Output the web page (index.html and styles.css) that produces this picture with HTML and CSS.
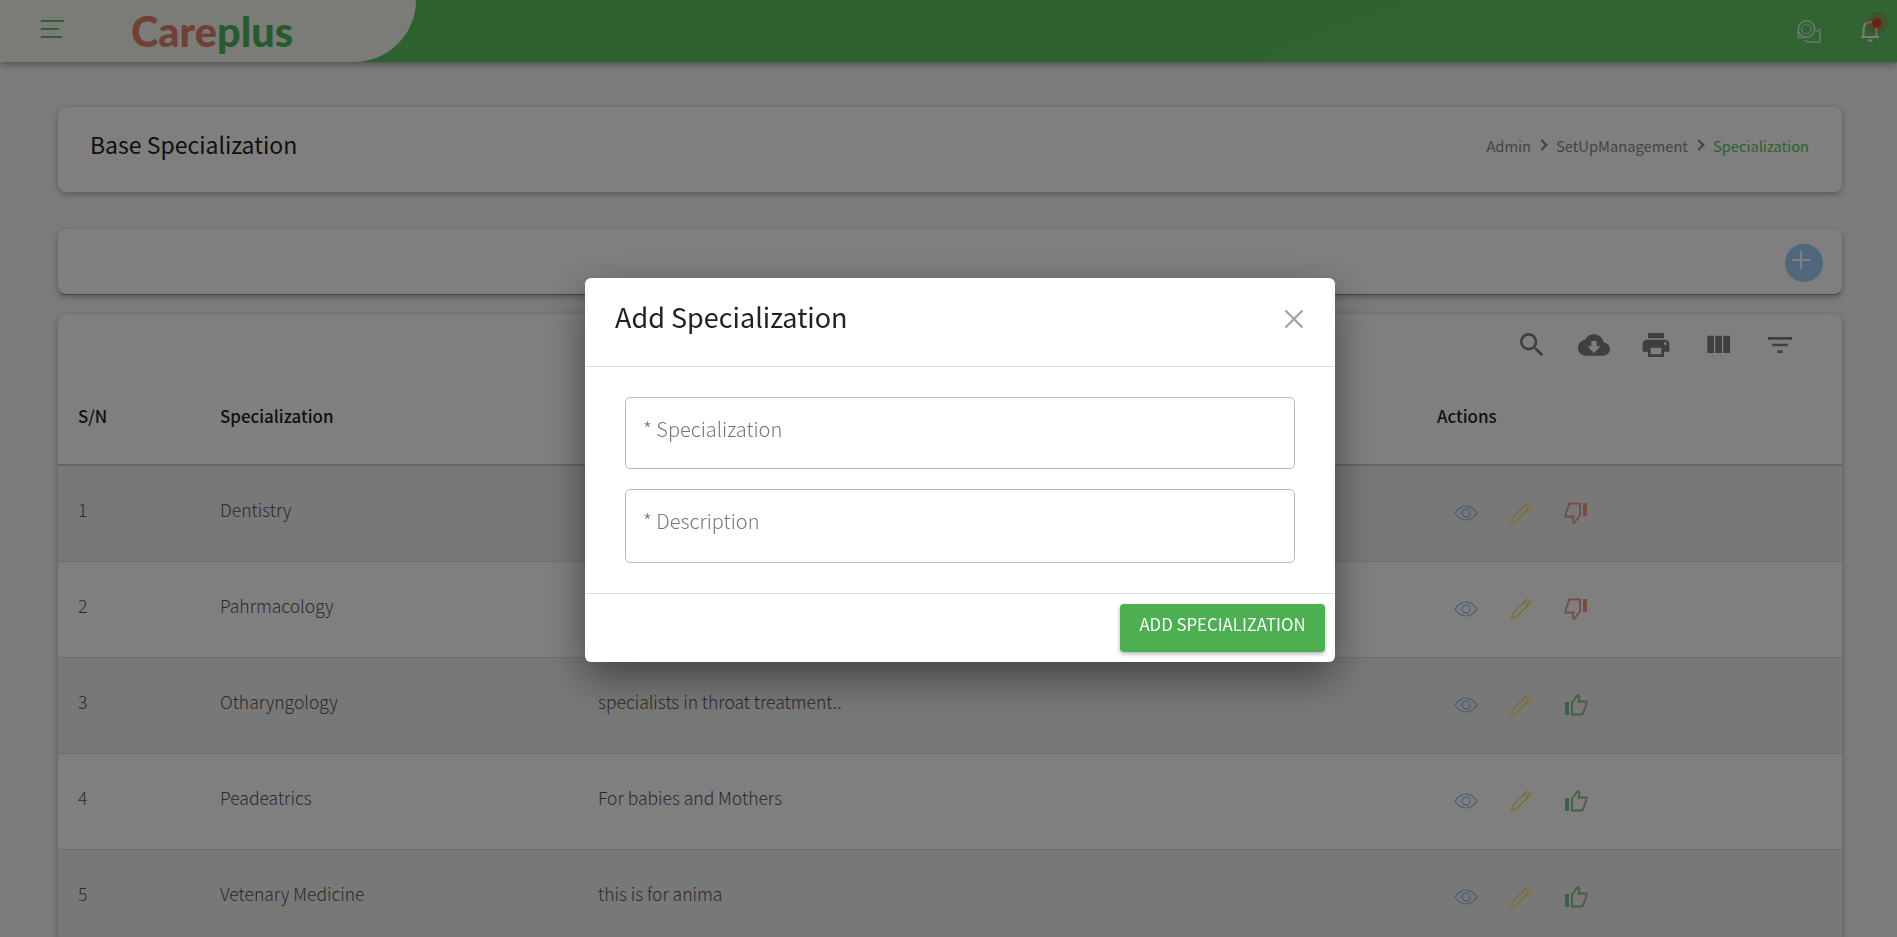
FILE: index.html
```html
<!DOCTYPE html>
<html lang="en">
<head>
  <meta charset="UTF-8" />
  <title>Careplus - Base Specialization</title>
  <link rel="stylesheet" href="styles.css">
</head>
<body>

  <svg class="icon-defs" width="0" height="0">
    <symbol id="i-eye" viewBox="0 0 24 16">
      <path d="M1 8C4 3.600 7.600 1 12 1s8 2.600 11 7c-3 4.400-6.600 7-11 7S4 12.400 1 8z" fill="none" stroke="currentColor" stroke-width="1.200"/>
      <circle cx="12" cy="8" r="4" fill="none" stroke="currentColor" stroke-width="1.200"/>
    </symbol>
    <symbol id="i-pencil" viewBox="0 0 22 22">
      <path d="M1.500 20.500l1.300-5.300L16 2.200c1-1 2.600-1 3.600 0 1 1 1 2.600 0 3.600L6.600 19l-5.100 1.500z" fill="none" stroke="currentColor" stroke-width="1.100"/>
      <path d="M15 3.400l3.400 3.600" fill="none" stroke="currentColor" stroke-width="1.100"/>
    </symbol>
    <symbol id="i-down" viewBox="0 0 24 22">
      <path d="M16 1.500H5.500L1.500 12v2.500h8L8.500 19l1.500 2 6-7.500z" fill="none" stroke="currentColor" stroke-width="1.800"/>
      <rect x="19" y="1" width="4" height="13"/>
    </symbol>
    <symbol id="i-up" viewBox="0 0 24 22">
      <path d="M8 20.500h10.500l4-10.500V7.500h-8L15.500 3 14 1 8 8.500z" fill="none" stroke="currentColor" stroke-width="1.800"/>
      <rect x="1" y="8" width="4" height="13"/>
    </symbol>
  </svg>

  <header class="topbar">
    <div class="brand">
      <svg class="menu-icon" width="24" height="18" viewBox="0 0 24 18">
        <path d="M0 1h23M0 9h18M0 17h21" stroke="#5cc45e" stroke-width="2"/>
      </svg>
      <div class="logo"><span class="logo-care">Care</span><span class="logo-plus">plus</span></div>
    </div>
    <div class="topbar-icons">
      <svg class="chat-icon" width="24" height="23" viewBox="0 0 24 23" fill="none" stroke="#fff" stroke-width="1.400">
        <circle cx="9.500" cy="9" r="8.300"/>
        <circle cx="9.500" cy="9" r="4.800" stroke-width="1"/>
        <path d="M1.200 10v7.500h8.300M19 12l4-2.500V22H10l-2.500-2"/>
      </svg>
      <div class="bell">
        <svg width="20" height="22" viewBox="0 0 20 22" fill="none" stroke="#fff" stroke-width="2">
          <path d="M1 17h18M3.500 17V9.500C3.500 5.500 6 2 10 2s6.500 3.500 6.500 7.500V17"/>
          <path d="M7.500 20.500h5"/>
        </svg>
        <span class="bell-dot"></span>
      </div>
    </div>
  </header>

  <main class="content">
    <section class="card page-title">
      <h2>Base Specialization</h2>
      <nav class="crumbs">
        <span>Admin</span><i class="chev"></i><span>SetUpManagement</span><i class="chev"></i><span class="crumb-active">Specialization</span>
      </nav>
    </section>

    <section class="card add-bar">
      <span class="add-btn"></span>
    </section>

    <section class="card table-card">
      <div class="table-tools">
        <svg width="32" height="32" viewBox="0 0 24 24"><path d="M15.500 14h-.79l-.28-.27A6.470 6.470 0 0 0 16 9.500 6.500 6.500 0 1 0 9.500 16c1.610 0 3.090-.59 4.230-1.570l.27.28v.79l5 4.990L20.490 19l-4.990-5zm-6 0C7.010 14 5 11.990 5 9.500S7.010 5 9.500 5 14 7.010 14 9.500 11.990 14 9.500 14z"/></svg>
        <svg width="32" height="32" viewBox="0 0 24 24"><path d="M19.350 10.040A7.490 7.490 0 0 0 12 4C9.110 4 6.600 5.640 5.350 8.040A5.994 5.994 0 0 0 0 14c0 3.310 2.690 6 6 6h13c2.760 0 5-2.240 5-5 0-2.640-2.050-4.780-4.650-4.960zM17 13l-5 5-5-5h3V9h4v4h3z"/></svg>
        <svg width="32" height="32" viewBox="0 0 24 24"><path d="M19 8H5c-1.660 0-3 1.340-3 3v6h4v4h12v-4h4v-6c0-1.660-1.340-3-3-3zm-3 11H8v-5h8v5zm3-7c-.550 0-1-.450-1-1s.450-1 1-1 1 .450 1 1-.450 1-1 1zm-1-9H6v4h12V3z"/></svg>
        <svg width="32" height="32" viewBox="0 0 24 24"><path d="M10 18h5V5h-5v13zm-6 0h5V5H4v13zM16 5v13h5V5h-5z"/></svg>
        <svg width="32" height="32" viewBox="0 0 24 24"><path d="M10 18h4v-2h-4v2zM3 6v2h18V6H3zm3 7h12v-2H6v2z"/></svg>
      </div>

      <div class="row row-head">
        <div class="col-sn">S/N</div>
        <div class="col-name">Specialization</div>
        <div class="col-desc"></div>
        <div class="col-actions">Actions</div>
      </div>

      <div class="row row-odd">
        <div class="col-sn">1</div>
        <div class="col-name">Dentistry</div>
        <div class="col-desc"></div>
        <div class="col-actions actions">
          <svg class="a-eye"><use href="#i-eye"/></svg>
          <svg class="a-pencil"><use href="#i-pencil"/></svg>
          <svg class="a-down"><use href="#i-down"/></svg>
        </div>
      </div>
      <div class="row">
        <div class="col-sn">2</div>
        <div class="col-name">Pahrmacology</div>
        <div class="col-desc"></div>
        <div class="col-actions actions">
          <svg class="a-eye"><use href="#i-eye"/></svg>
          <svg class="a-pencil"><use href="#i-pencil"/></svg>
          <svg class="a-down"><use href="#i-down"/></svg>
        </div>
      </div>
      <div class="row row-odd">
        <div class="col-sn">3</div>
        <div class="col-name">Otharyngology</div>
        <div class="col-desc">specialists in throat treatment..</div>
        <div class="col-actions actions">
          <svg class="a-eye"><use href="#i-eye"/></svg>
          <svg class="a-pencil"><use href="#i-pencil"/></svg>
          <svg class="a-up"><use href="#i-up"/></svg>
        </div>
      </div>
      <div class="row">
        <div class="col-sn">4</div>
        <div class="col-name">Peadeatrics</div>
        <div class="col-desc">For babies and Mothers</div>
        <div class="col-actions actions">
          <svg class="a-eye"><use href="#i-eye"/></svg>
          <svg class="a-pencil"><use href="#i-pencil"/></svg>
          <svg class="a-up"><use href="#i-up"/></svg>
        </div>
      </div>
      <div class="row row-odd">
        <div class="col-sn">5</div>
        <div class="col-name">Vetenary Medicine</div>
        <div class="col-desc">this is for anima</div>
        <div class="col-actions actions">
          <svg class="a-eye"><use href="#i-eye"/></svg>
          <svg class="a-pencil"><use href="#i-pencil"/></svg>
          <svg class="a-up"><use href="#i-up"/></svg>
        </div>
      </div>
    </section>
  </main>

  <div class="backdrop">
    <div class="modal">
      <div class="modal-head">
        <h3>Add Specialization</h3>
        <svg class="modal-close" width="20" height="20" viewBox="0 0 20 20"><path d="M1.500 1.500l17 17M18.500 1.500l-17 17" stroke="#a5a5a5" stroke-width="2.400"/></svg>
      </div>
      <div class="modal-body">
        <div class="field field-first">* Specialization</div>
        <div class="field field-second">* Description</div>
      </div>
      <div class="modal-foot">
        <button class="save-btn">ADD SPECIALIZATION</button>
      </div>
    </div>
  </div>

</body>
</html>
```

FILE: styles.css
```css
:root {
  --brand: #5cc45e;
  --line: #dedede;
}

* {
  box-sizing: border-box;
  margin: 0;
  padding: 0;
}

html, body {
  height: 100%;
  overflow: hidden;
}

body {
  font-family: "Noto Sans CJK SC", "Noto Sans", sans-serif;
  background: #f8f8f8;
  color: #333;
}

.icon-defs {
  position: absolute;
}

/* top bar */
.topbar {
  height: 62px;
  display: flex;
  justify-content: space-between;
  background: var(--brand);
  box-shadow: 0 2px 8px rgba(0, 0, 0, 0.4);
  position: relative;
  overflow: hidden;
}

.topbar::before {
  content: '';
  position: absolute;
  left: 1059px;
  top: -50px;
  width: 1482px;
  height: 700px;
  border-radius: 50%;
  background: rgba(255, 255, 255, 0.06);
}

.brand {
  width: 416px;
  display: flex;
  align-items: center;
  padding-left: 41px;
  background: #f7f8ef;
  border-bottom-right-radius: 62px 62px;
  position: relative;
}

.menu-icon {
  margin-top: -4px;
}

.logo {
  margin-left: 66px;
  font-family: "Lato", sans-serif;
  font-weight: 900;
  font-size: 41.500px;
  line-height: 62px;
}

.logo-care { color: #e0806e; }
.logo-plus { color: #4cb85a; }

.topbar-icons {
  display: flex;
  align-items: center;
  gap: 39px;
  padding-right: 17px;
  position: relative;
}

.chat-icon {
  opacity: 0.8;
}

.bell {
  position: relative;
  height: 22px;
  opacity: 0.9;
}

.bell-dot {
  position: absolute;
  left: 12px;
  top: -2px;
  width: 10px;
  height: 10px;
  border-radius: 50%;
  background: #f03030;
  box-shadow: 0 0 0 6px rgba(240, 48, 48, 0.25);
}

/* page */
.content {
  padding: 45px 55px 0 58px;
}

.card {
  background: #fff;
  border-radius: 8px;
  box-shadow: 0 2px 6px rgba(0, 0, 0, 0.3);
}

.page-title {
  height: 85px;
  display: flex;
  align-items: center;
  justify-content: space-between;
  padding: 0 33px 0 32px;
}

.page-title h2 {
  font-size: 23px;
  font-weight: 400;
  color: #222;
  margin-bottom: 12px;
}

.crumbs {
  display: flex;
  align-items: center;
  font-size: 14.700px;
  color: #888;
  margin-bottom: 9px;
}

.crumb-active {
  color: var(--brand);
}

.chev {
  width: 8px;
  height: 8px;
  margin: 0 10px 0 7px;
  border-top: 2px solid #888;
  border-right: 2px solid #888;
  transform: rotate(45deg);
}

.add-bar {
  height: 66px;
  margin-top: 37px;
  padding: 3px 19px 0 0;
  display: flex;
  align-items: center;
  justify-content: flex-end;
  border-bottom: 1px solid #888;
}

.add-btn {
  width: 38px;
  height: 38px;
  border-radius: 50%;
  background: #a0ccf8;
  position: relative;
  display: block;
}

.add-btn::before,
.add-btn::after {
  content: '';
  position: absolute;
  background: #fff;
}

.add-btn::before {
  left: 7px;
  top: 15px;
  width: 18px;
  height: 2px;
}

.add-btn::after {
  left: 15px;
  top: 7px;
  width: 2px;
  height: 18px;
}

.table-card {
  margin-top: 19px;
}

.table-tools {
  height: 62px;
  display: flex;
  align-items: center;
  justify-content: flex-end;
  gap: 30px;
  padding-right: 46px;
  fill: #7e7e7e;
}

.row {
  height: 96px;
  display: flex;
  align-items: center;
  padding-left: 20px;
  font-size: 17.500px;
  font-weight: 300;
  color: #555;
  border-bottom: 1px solid #ddd;
}

.row > div {
  margin-bottom: 9px;
}

.row > .actions {
  margin-bottom: 2px;
}

.row-head {
  height: 90px;
  font-size: 16.900px;
  font-weight: 500;
  color: #222;
  border-bottom: 2px solid #ccc;
}

.row-head > div {
  margin-bottom: 10px;
}

.row-odd {
  background: #f0f0f0;
}

.col-sn { width: 142px; }
.col-name { width: 378px; }
.col-desc { width: 839px; }

.actions {
  display: flex;
  align-items: center;
  gap: 32px;
  padding-left: 17px;
}

.actions svg {
  fill: currentColor;
}

.a-eye { width: 24px; height: 16px; color: #8fb2ea; }
.a-pencil { width: 22px; height: 22px; color: #f5d838; }
.a-down { width: 24px; height: 22px; color: #e89a84; }
.a-up { width: 24px; height: 22px; color: #7fc08a; }

/* modal */
.backdrop {
  position: fixed;
  inset: 0;
  background: rgba(0, 0, 0, 0.5);
  display: flex;
  align-items: center;
  justify-content: center;
  padding: 3px 0 0 23px;
}

.modal {
  width: 750px;
  height: 384px;
  background: #fff;
  border-radius: 6px;
  box-shadow: 0 15px 40px rgba(0, 0, 0, 0.45);
  display: flex;
  flex-direction: column;
}

.modal-head {
  height: 89px;
  display: flex;
  align-items: center;
  justify-content: space-between;
  padding: 0 31px 0 30px;
  border-bottom: 1px solid var(--line);
}

.modal-head h3 {
  font-size: 27px;
  font-weight: 400;
  color: #222;
  margin-bottom: 12px;
}

.modal-close {
  margin-bottom: 6px;
}

.modal-body {
  flex: 1;
  padding: 30px 40px 0;
}

.field {
  border: 1px solid #bbb;
  border-radius: 5px;
  padding: 16px 17px 0;
  font-size: 20px;
  color: #777;
  font-weight: 300;
}

.field-first {
  height: 72px;
}

.field-second {
  height: 74px;
  margin-top: 20px;
}

.modal-foot {
  height: 69px;
  display: flex;
  align-items: center;
  justify-content: flex-end;
  padding-right: 10px;
  border-top: 1px solid var(--line);
}

.save-btn {
  width: 205px;
  height: 48px;
  padding-bottom: 9px;
  border: none;
  border-radius: 4px;
  background: #4caf50;
  color: #fff;
  font-family: inherit;
  font-size: 16.800px;
  box-shadow: 0 2px 4px rgba(0, 0, 0, 0.3);
}
```
